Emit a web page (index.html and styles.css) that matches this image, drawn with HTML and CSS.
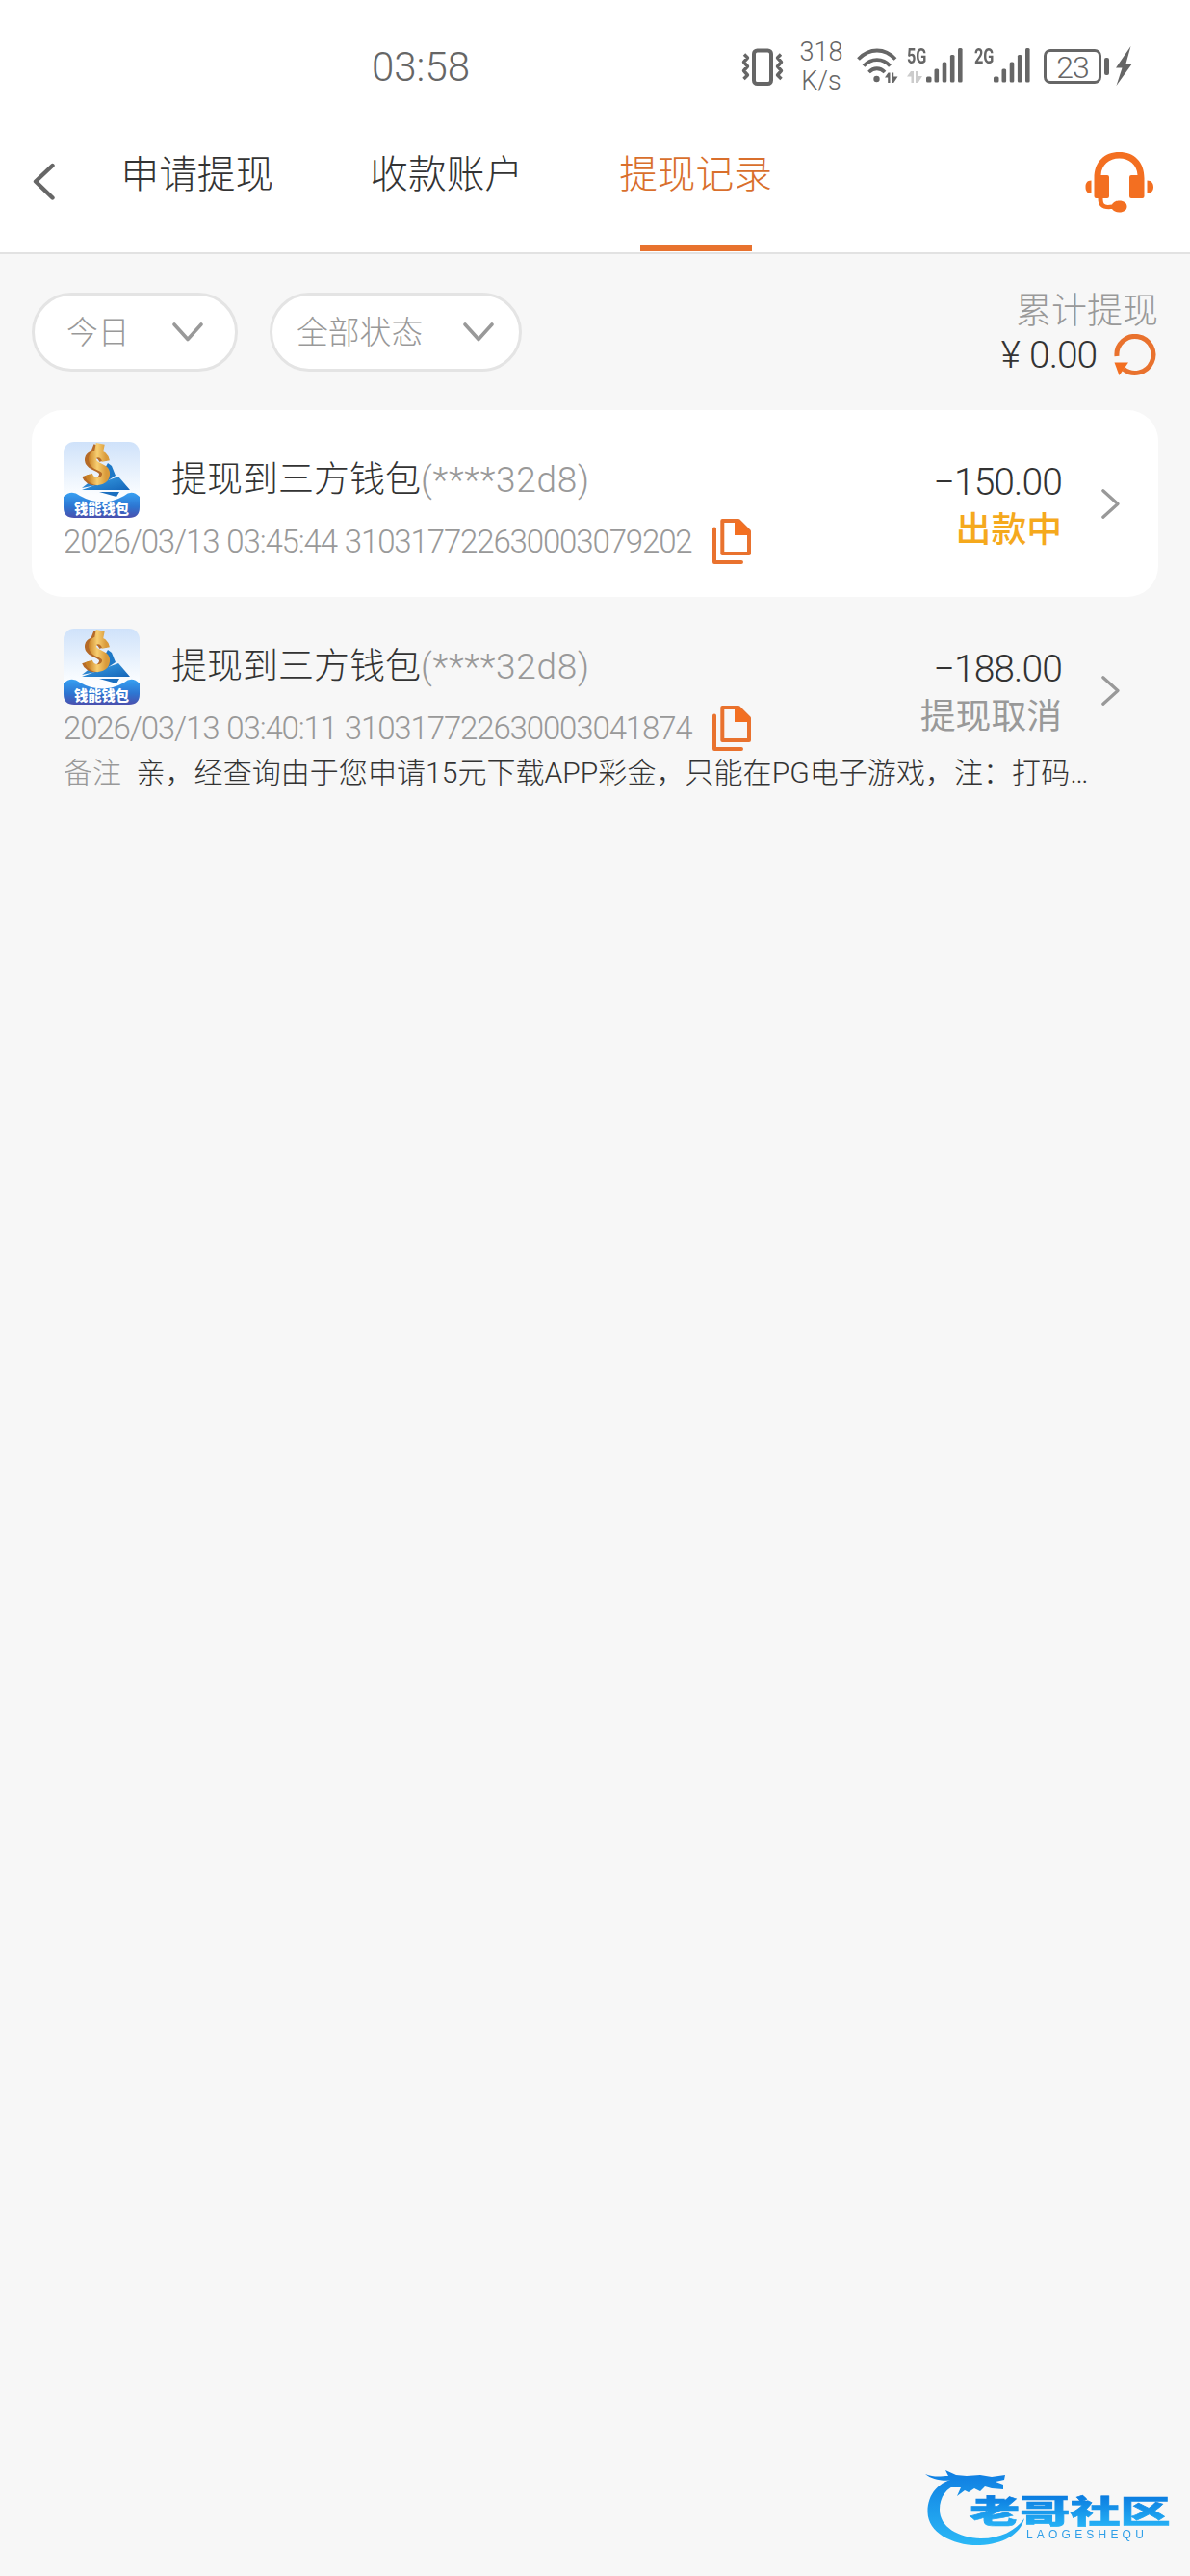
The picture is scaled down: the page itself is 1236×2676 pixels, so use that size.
FILE: index.html
```
<!DOCTYPE html>
<html lang="zh-CN">
<head>
<meta charset="utf-8">
<title>提现记录</title>
<link rel="stylesheet" href="styles.css">
</head>
<body>
<svg class="defs" width="0" height="0" aria-hidden="true">
  <defs>
    <linearGradient id="sky" x1="0" y1="0" x2="0" y2="1"><stop offset="0" stop-color="#cfe2fa"/><stop offset=".7" stop-color="#fbfdff"/></linearGradient>
    <linearGradient id="sea" x1="0" y1="0" x2="0" y2="1"><stop offset="0" stop-color="#37a0f2"/><stop offset=".55" stop-color="#2d76d2"/><stop offset="1" stop-color="#4a50ae"/></linearGradient>
    <linearGradient id="gold" x1="0" y1="0" x2="1" y2="0"><stop offset="0" stop-color="#c98226"/><stop offset=".5" stop-color="#f8cf72"/><stop offset="1" stop-color="#d99a3a"/></linearGradient>
    <linearGradient id="sail" x1="0" y1="0" x2="1" y2="1"><stop offset="0" stop-color="#3ba3e8"/><stop offset="1" stop-color="#1565b8"/></linearGradient>
    <symbol id="wallet" viewBox="0 0 79 79">
      <rect width="79" height="79" rx="11" fill="url(#sky)"/>
      <path d="M46 22 50 25 54 35 42 43 36 40Z" fill="#1e78c6"/>
      <path d="M19 50 57 36 69 50Z" fill="url(#sail)"/>
      <path d="M37 52H58L55 57Z" fill="#1b6fc0"/>
      <path d="M19 48 28 41 34 45Z" fill="#2b84cf"/>
      <path d="M30 6 35 8 34 12M41 20C39 11 26 11 26 19 27 27 42 26 41 34 40 43 26 44 23 35" fill="none" stroke="#b56a28" stroke-width="8"/>
      <path d="M33 5 38 6 37 11M44 20C42 10 29 10 30 19 31 27 45 25 44 34 43 43 29 44 26 34" fill="none" stroke="url(#gold)" stroke-width="8"/>
      <path d="M0 57Q8 49 17 56 40 69 63 56 71 49 79 57V68Q79 79 68 79H11Q0 79 0 68Z" fill="url(#sea)"/>
      <text x="39.5" y="75.4" text-anchor="middle" class="wallet-name">钱能钱包</text>
    </symbol>
    <symbol id="copy" viewBox="0 0 40 47">
      <path d="M2 10.500V45H30" fill="none" stroke="#e9722e" stroke-width="4" stroke-linecap="round" stroke-linejoin="round"/>
      <path d="M10.300 2H27L38 13V36H10.300Z" fill="none" stroke="#e9722e" stroke-width="4" stroke-linejoin="round"/>
      <path d="M23 2H28L38.500 13V17H23Z" fill="#f36f21"/>
    </symbol>
    <symbol id="next" viewBox="0 0 19 31"><path d="M1.800 1.800 17 15.500 1.800 29.200" fill="none" stroke="#999" stroke-width="3.200" stroke-linecap="round" stroke-linejoin="round"/></symbol>
    <symbol id="down" viewBox="0 0 32 20"><path d="M2 2 16 17.500 30 2" fill="none" stroke="#999" stroke-width="3.600" stroke-linecap="round" stroke-linejoin="round"/></symbol>
  </defs>
</svg>
<header class="header">
  <div class="status">
    <span class="clock">03:58</span>
    <svg class="vibrate" width="44" height="40" viewBox="0 0 44 40" fill="none" stroke="#666"><rect x="13" y="2.500" width="18" height="34.500" rx="3.500" stroke-width="4"/><path d="M3 6.500 6.500 10 2.500 14.500 6.500 19 2.500 23.500 6.500 28 2.500 32M41 6.500 37.500 10 41.500 14.500 37.500 19 41.500 23.500 37.500 28 41.500 32" stroke-width="3.400" stroke-linejoin="round"/></svg>
    <div class="speed"><span>318</span><span>K/s</span></div>
    <svg class="wifi" width="43" height="36" viewBox="0 0 43 36" fill="none" stroke="#666"><path d="M1.500 11.500C13-.5 29-.5 40 11.500M7 18.500C15 10 27 10 34.500 18.500M12.500 25C17.500 20 24 20 29 25" stroke-width="3.800"/><circle cx="20.500" cy="32" r="3.200" fill="#666" stroke="none"/><path d="M29 30.500 32.500 25.500H34.500V36H32.200V30.500ZM36 25.500H38.200V29.500H42.500L38.200 36H36Z" fill="#666" stroke="none"/></svg>
    <div class="signal"><div class="net"><b>5G</b><svg width="16" height="12" viewBox="0 0 16 12" fill="#ccc"><path d="M0 5.500 4 0H7V12H4.500V5.500ZM9 0H11.500V5H16L11.500 12H9Z"/></svg></div>
      <svg width="39" height="36" viewBox="0 0 39 36" fill="#666"><rect y="29.500" width="5.500" height="6" rx="1.500"/><rect x="8.500" y="21.500" width="4.600" height="14" rx="1.500"/><rect x="16.700" y="14.500" width="4.600" height="21" rx="1.500"/><rect x="24.900" y="7" width="4.600" height="28.500" rx="1.500"/><rect x="33" y="0" width="4.600" height="35.500" rx="1.500"/></svg></div>
    <div class="signal second"><div class="net"><b>2G</b></div>
      <svg width="39" height="36" viewBox="0 0 39 36" fill="#666"><rect y="29.500" width="5.500" height="6" rx="1.500"/><rect x="8.500" y="21.500" width="4.600" height="14" rx="1.500"/><rect x="16.700" y="14.500" width="4.600" height="21" rx="1.500"/><rect x="24.900" y="7" width="4.600" height="28.500" rx="1.500"/><rect x="33" y="0" width="4.600" height="35.500" rx="1.500"/></svg></div>
    <div class="battery"><span>23</span></div><i class="cap"></i>
    <svg class="bolt" width="17" height="41" viewBox="0 0 17 41"><path d="M15.500 0 0 22.500H6.500L.5 41 17 18H10.500Z" fill="#666"/></svg>
  </div>
  <nav class="nav">
    <svg class="back" width="25" height="40" viewBox="0 0 25 40"><path d="M20.500 3 3 19.500 20.500 36.500" fill="none" stroke="#666" stroke-width="4.400" stroke-linecap="round" stroke-linejoin="round"/></svg>
    <div class="tabs"><a class="tab">申请提现</a><a class="tab">收款账户</a><a class="tab active">提现记录</a></div>
    <svg class="service" width="72" height="63" viewBox="0 0 72 63"><g fill="#f36f21"><path d="M9.500 46V27C9.500 10 20 0 35.500 0S61.500 10 61.500 27V46Q61.500 48 59.500 48H48Q46 48 46 46V26Q46 24 48 24H54.500C54 13 46 6.500 35.500 6.500S17 13 16.500 24H23Q25 24 25 26V46Q25 48 23 48H18.500C18.500 55 21 55.500 28 54.500 30 51 33 50.500 35.500 50.500 40.500 50.500 43.500 53 43.500 56.500S40.500 62.500 35.500 62.500C32 62.500 29.500 61 28 59 17 60 13.500 56 13.500 48H11.500Q9.500 48 9.500 46Z"/><path d="M6.500 29.500V43C2 43 .5 40 .5 36.200S2 29.500 6.500 29.500ZM64.500 29.500V43C69 43 71 40 71 36.200S69 29.500 64.500 29.500Z"/></g></svg>
  </nav>
</header>
<main class="page">
  <section class="filters">
    <div class="pill day"><span>今日</span><svg width="32" height="20"><use href="#down"/></svg></div>
    <div class="pill state"><span>全部状态</span><svg width="32" height="20"><use href="#down"/></svg></div>
    <div class="total"><span class="label">累计提现</span>
      <div class="sum"><span class="yen">¥</span><span class="num">0.00</span><svg width="44" height="44" viewBox="0 0 44 44"><path d="M3 23A19 19 0 1 1 10 36.200" fill="none" stroke="#e9722e" stroke-width="5"/><path d="M.5 29.500H15L5.500 43Z" fill="#f36f21"/></svg></div></div>
  </section>
  <article class="record paying">
    <div class="main">
      <div class="info">
        <div class="top"><svg width="79" height="79"><use href="#wallet"/></svg><div class="name"><span class="title">提现到三方钱包</span><span class="acct">(****32d8)</span></div></div>
        <div class="meta"><span class="no">2026/03/13 03:45:44 310317722630003079202</span><svg width="40" height="47"><use href="#copy"/></svg></div>
      </div>
      <div class="money"><span class="amount">−150.00</span><span class="result">出款中</span></div>
      <svg class="go" width="19" height="31"><use href="#next"/></svg>
    </div>
  </article>
  <article class="record">
    <div class="main">
      <div class="info">
        <div class="top"><svg width="79" height="79"><use href="#wallet"/></svg><div class="name"><span class="title">提现到三方钱包</span><span class="acct">(****32d8)</span></div></div>
        <div class="meta"><span class="no">2026/03/13 03:40:11 310317722630003041874</span><svg width="40" height="47"><use href="#copy"/></svg></div>
      </div>
      <div class="money"><span class="amount">−188.00</span><span class="result">提现取消</span></div>
      <svg class="go" width="19" height="31"><use href="#next"/></svg>
    </div>
    <div class="note"><span class="note-label">备注</span><span class="note-text">亲，经查询由于您申请15元下载APP彩金，只能在PG电子游戏，注：打码…</span></div>
  </article>
</main>
<svg class="watermark" width="296" height="136" viewBox="0 0 296 136">
  <defs><linearGradient id="wave" gradientUnits="userSpaceOnUse" x1="0" y1="28" x2="0" y2="104"><stop offset="0" stop-color="#0f7ee2"/><stop offset="1" stop-color="#2bb8f6"/></linearGradient>
  <linearGradient id="word" x1="0" y1="0" x2="0" y2="1"><stop offset=".2" stop-color="#0b7ce0"/><stop offset=".9" stop-color="#27b3f6"/></linearGradient></defs>
  <g fill="url(#wave)">
    <path d="M56 34C34 37 23 52 23.500 70 24 91 50 105 78 104 101 103 120 93 124 76 115 89 99 97 79 97 55 96 36 85 36 67 36 54 43 44 55 41Z"/>
    <path d="M21 30C31 34 38 32 45 32L42 26 53 31 64 32 78 31 90 33 104 31 103 36 94 38 102 41 102 46 90 45 83 43 78 48 72 45 66 49 62 47 54 53 58 44 46 44 53 36C39 38 28 36 21 30Z"/>
  </g>
  <text class="wm-name" transform="translate(67 80.500) scale(1.45 .9)" fill="url(#word)" stroke="url(#word)">老哥社区</text>
  <text class="wm-latin" x="126" y="97" fill="#2f9fe8">LAOGESHEQU</text>
</svg>
</body>
</html>
```
FILE: styles.css
```
* { box-sizing: border-box; }
body {
  position: relative;
  margin: 0;
  min-height: 2676px;
  background: #f7f7f7;
  color: #333;
  font-family: Roboto, "Noto Sans CJK SC", sans-serif;
  font-weight: 280;
}
svg { display: block; flex: none; }
span, a { white-space: nowrap; }
.defs { position: absolute; }

.header { height: 264px; background: #fff; border-bottom: 2px solid #e2e2e2; }
.status { display: flex; height: 116px; padding: 50px 0 0 385px; color: #666; }
.clock { width: 384px; margin: 2px 0 0 1px; font-size: 42px; line-height: 36px; letter-spacing: 0; }
.speed { display: flex; flex-direction: column; width: 46px; margin: -11px 0 0 16px; text-align: center; font-size: 27px; line-height: 30px; }
.wifi { margin-left: 14px; }
.signal { display: flex; margin-left: 9px; }
.signal.second { margin-left: 11px; }
.net { width: 20px; }
.net b { display: block; height: 24px; font-size: 22px; line-height: 17px; font-weight: 700; transform: scaleX(.74); transform-origin: 0 0; }
.battery { width: 60px; height: 36px; margin: 1px 0 0 13px; border: 3px solid #666; border-radius: 7px; font-size: 32px; line-height: 32px; text-align: center; letter-spacing: -1px; }
.cap { width: 5px; height: 18px; margin: 10px 0 0 3px; border-radius: 2px; background: #666; }
.bolt { margin: -2px 0 0 7px; }

.nav { display: flex; align-items: center; height: 146px; padding: 0 37px 0 33.500px; }
.tabs { display: flex; flex: 1; gap: 100.1px; margin-left: 67px; }
.tab { position: relative; height: 146px; font-size: 39.700px; line-height: 131px; }
.tab.active { color: #d96f2c; }
.tab.active::after { content: ""; position: absolute; left: 22px; bottom: 1px; width: 116px; height: 7px; background: #e8722e; }

.page { padding: 40px 33px 0; }
.filters { display: flex; height: 122px; }
.pill { display: flex; align-items: center; justify-content: space-between; height: 82px; border: 3px solid #e4e4e4; border-radius: 41px; background: #fff; color: #999; font-size: 32.800px; line-height: 76px; }
.pill span { height: 74px; }
.day { width: 214px; padding-left: 33px; padding-right: 33px; }
.state { width: 262px; margin-left: 33px; padding-left: 25px; padding-right: 26px; }
.total { display: flex; flex-direction: column; align-items: flex-end; margin: -7px 0 0 auto; }
.label { color: #999; font-size: 37px; line-height: 54px; height: 50px; }
.sum { display: flex; align-items: center; height: 44px; margin-right: 2px; font-size: 39px; }
.num { width: 71px; margin: 0 17px 0 9px; letter-spacing: -1px; }
.yen { font-size: 39px; }

.record { padding: 33px; border-radius: 32px; }
.paying { background: #fff; }
.main { display: flex; align-items: center; height: 128px; }
.info { flex: 1; }
.top { display: flex; align-items: center; height: 79px; font-size: 37px; }
.name { margin-left: 33px; line-height: 79px; }
.acct { color: #999; letter-spacing: .7px; }
.meta { display: flex; align-items: center; height: 49px; color: #999; }
.no { width: 674px; font-size: 33px; letter-spacing: -1.13px; word-spacing: 1px; }
.money { display: flex; flex-direction: column; align-items: flex-end; width: 160px; line-height: 49px; padding-top: 6px; }
.amount { font-size: 39px; letter-spacing: -.9px; }
.result { font-size: 36.800px; font-weight: 380; color: #999; }
.paying .result { color: #f5a91d; font-weight: 480; }
.go { margin: 0 7px 0 41px; }
.note { display: flex; height: 42px; font-size: 30px; line-height: 43px; }
.note-label { width: 75.500px; color: #999; }
.note-text { letter-spacing: .05px; }

.wallet-name { fill: #fff; font: 900 14.300px "Noto Sans CJK SC", sans-serif; }
.watermark { position: absolute; left: 940px; top: 2540px; filter: blur(.6px); }
.wm-name { font: 900 36px "Noto Sans CJK SC", sans-serif; stroke-width: .7px; }
.wm-latin { font: 400 12px "Liberation Sans", sans-serif; letter-spacing: 4.200px; }
```
